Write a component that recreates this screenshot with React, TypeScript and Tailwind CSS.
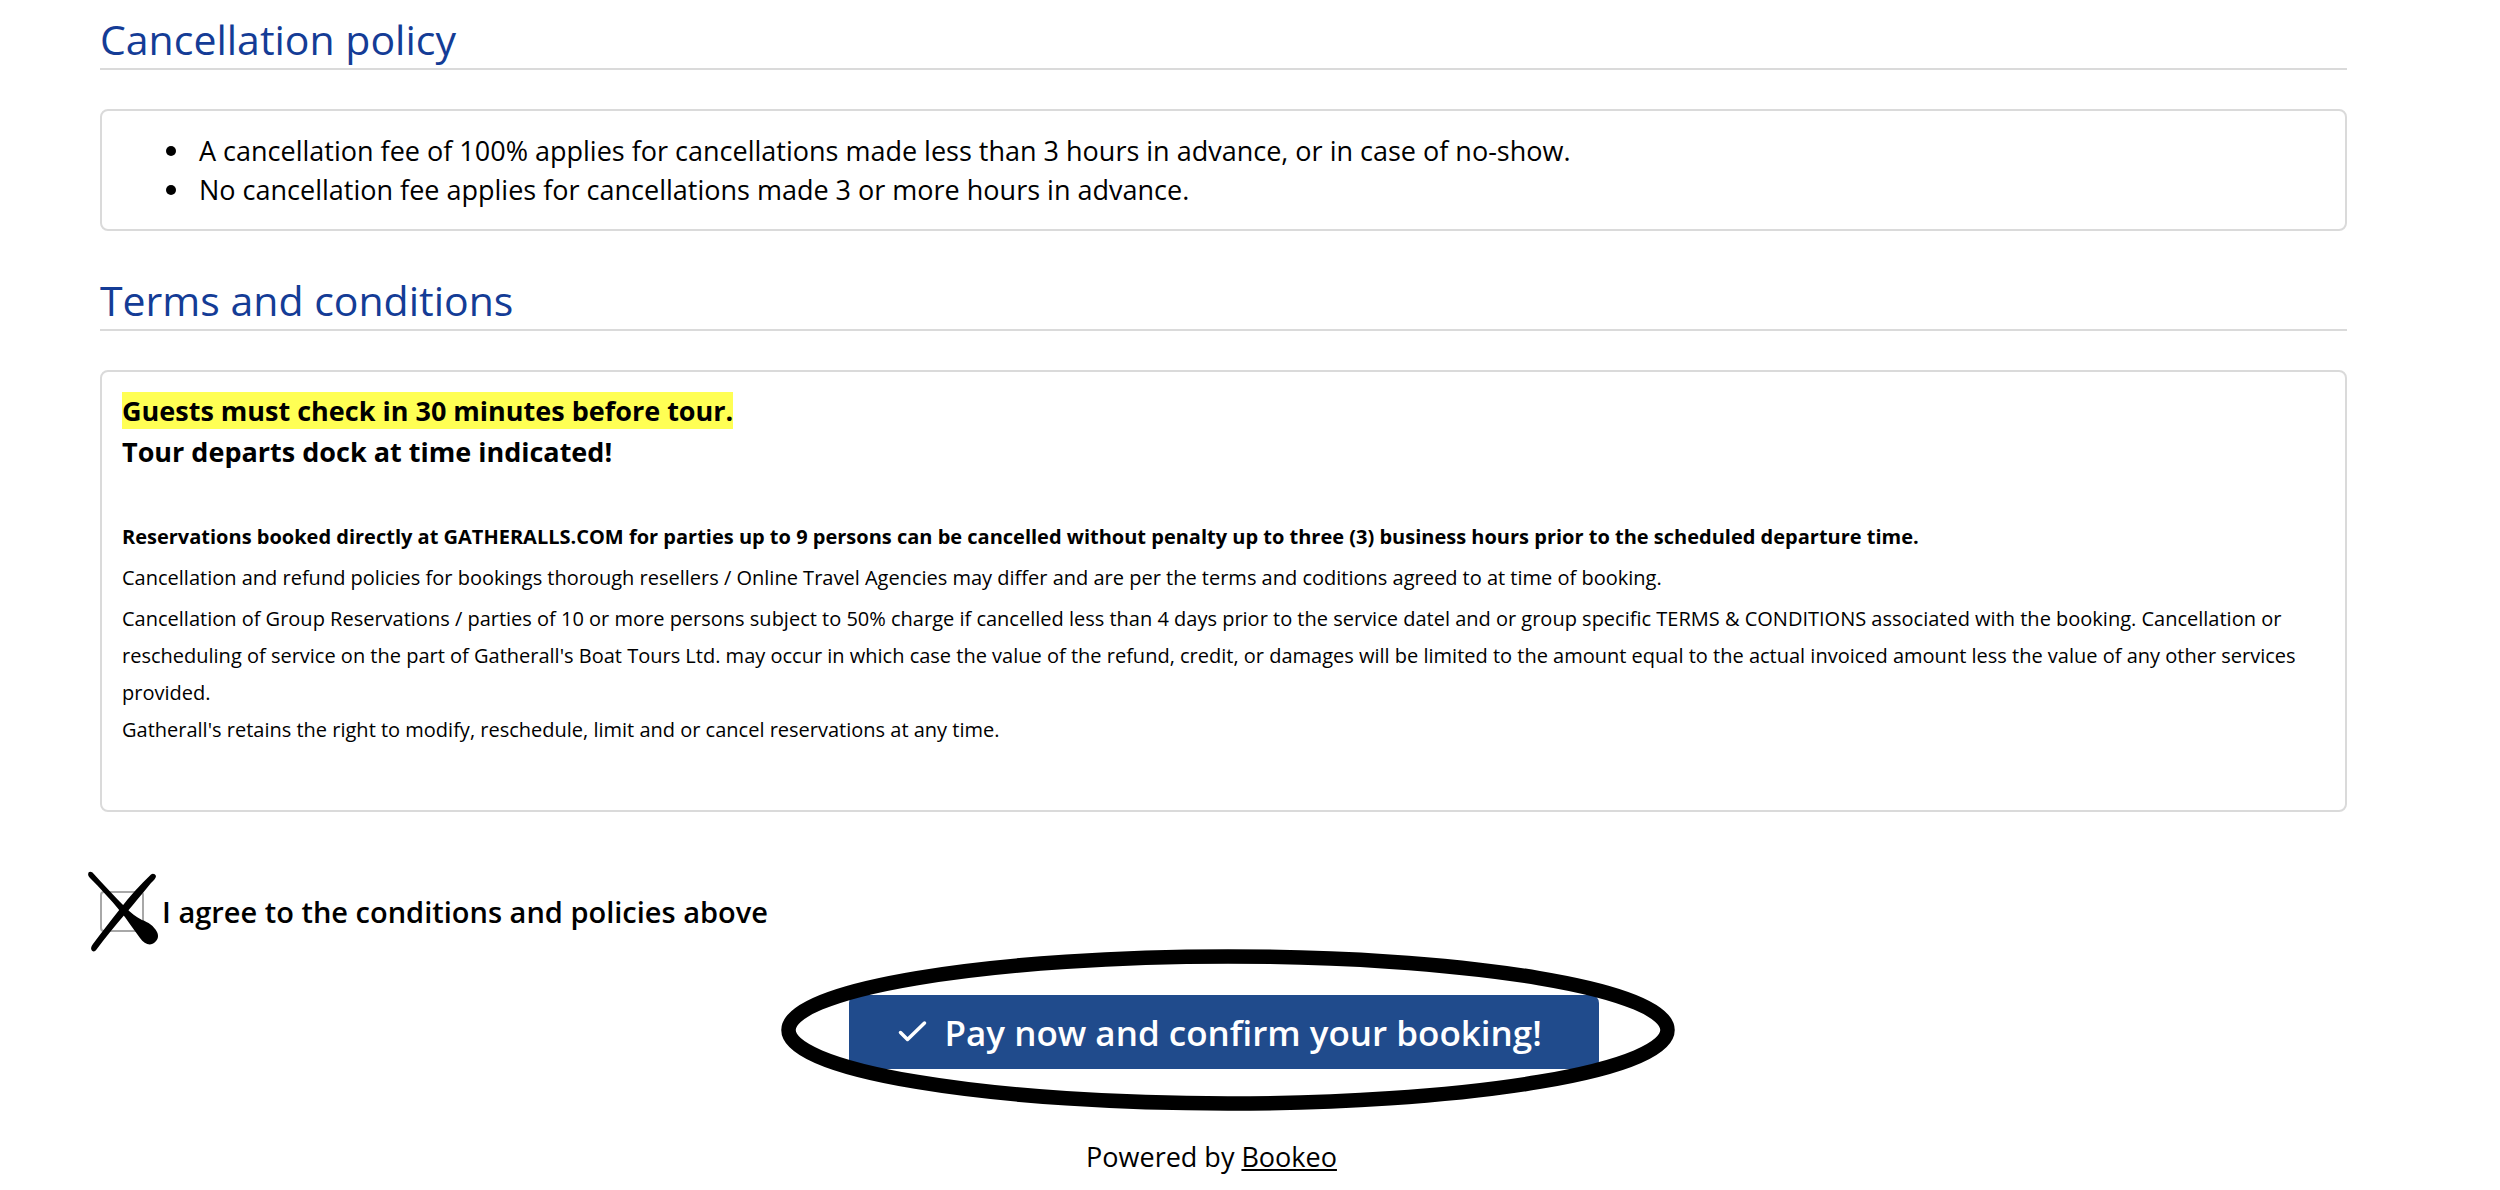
import { useState, type ReactNode } from "react";

const CANCELLATION_RULES = [
  "A cancellation fee of 100% applies for cancellations made less than 3 hours in advance, or in case of no-show.",
  "No cancellation fee applies for cancellations made 3 or more hours in advance.",
];

function Section({ title, children }: { title: string; children: ReactNode }) {
  return (
    <section>
      <h2 className="mb-[39px] h-[70px] border-b-2 border-[#dadada] pt-2 text-[41px] leading-[62px] text-[#143c96]">
        {title}
      </h2>
      <div className="rounded-lg border-2 border-[#dadada] px-5">{children}</div>
    </section>
  );
}

/** Hand-drawn cross over the tick box. */
function PenCross() {
  return (
    <svg
      viewBox="0 0 120 120"
      className="pointer-events-none absolute -left-[30px] -top-[41px] h-[120px] w-[120px]"
      aria-hidden="true"
    >
      <path
        d="M18.5 22.5C17.5 25 18.5 26 20 28C30 38 41 50 50 61C57 69 63 79 70 88C74 94 80 96 84 93C88 90 89 86 87 82C84 76 78 72 72 70C66 67 61 63 56 58C44 46 33 34 22.5 22.5C21 21.5 19.5 21.5 18.5 22.5Z"
        fill="black"
      />
      <path
        d="M81 24.5C83 23 85 24 86 26C86 28 84 30 81 33C71 45 63 55 56 63C45 76 35 88 26.5 99.5C25 102 22.5 102 21.5 100C20.5 98 21.5 96 23 94C32 82 41 70 50 59C60 46 70 35 81 24.5Z"
        fill="black"
      />
    </svg>
  );
}

export default function App() {
  const [agreed, setAgreed] = useState(false);

  return (
    <main className="bg-white pb-2 pl-[100px] pr-[153px] font-['Open_Sans',sans-serif] text-[27px] leading-[39px] text-black">
      <Section title="Cancellation policy">
        <ul className="py-5 pl-11">
          {CANCELLATION_RULES.map((rule) => (
            <li
              key={rule}
              className="flex items-center gap-[23px] before:h-2.5 before:w-2.5 before:shrink-0 before:rounded-full before:bg-black"
            >
              {rule}
            </li>
          ))}
        </ul>
      </Section>

      <div className="mt-[30px]">
        <Section title="Terms and conditions">
          <div className="pb-[62px] pt-[18px] text-[20px] leading-[37px]">
            <p className="text-[27px] font-bold leading-[41px]">
              <span className="bg-[#ffff54]">Guests must check in 30 minutes before tour.</span>
            </p>
            <p className="mb-[44px] text-[27px] font-bold leading-[41px]">
              Tour departs dock at time indicated!
            </p>
            <p className="font-bold leading-[41px]">
              Reservations booked directly at GATHERALLS.COM for parties up to 9 persons can be
              cancelled without penalty up to three (3) business hours prior to the scheduled
              departure time.
            </p>
            <p className="mb-0.5 leading-[41px]">
              Cancellation and refund policies for bookings thorough resellers / Online Travel
              Agencies may differ and are per the terms and coditions agreed to at time of booking.
            </p>
            <p>
              Cancellation of Group Reservations / parties of 10 or more persons subject to 50%
              charge if cancelled less than 4 days prior to the service datel and or group specific
              TERMS &amp; CONDITIONS associated with the booking. Cancellation or rescheduling of
              service on the part of Gatherall's Boat Tours Ltd. may occur in which case the value
              of the refund, credit, or damages will be limited to the amount equal to the actual
              invoiced amount less the value of any other services provided.
            </p>
            <p>
              Gatherall's retains the right to modify, reschedule, limit and or cancel reservations
              at any time.
            </p>
          </div>
        </Section>
      </div>

      <div className="mt-[79px] flex items-center">
        <div className="relative h-[41px] w-11 shrink-0">
          <input
            id="agree"
            type="checkbox"
            checked={agreed}
            onChange={(e) => setAgreed(e.target.checked)}
            className="block h-full w-full appearance-none rounded-sm border-2 border-[#a8a8a8] bg-white"
          />
          <PenCross />
        </div>
        <label htmlFor="agree" className="pl-[18px] text-[29px] font-semibold">
          I agree to the conditions and policies above
        </label>
      </div>

      <div className="mt-[63px] flex justify-center">
        <div className="relative">
          <button
            type="button"
            className="flex h-[74px] w-[750px] items-center rounded-lg bg-[#204b8c] pl-12 text-[35px] font-semibold text-white"
          >
            <svg viewBox="0 0 32 32" className="mr-4 h-8 w-8" fill="none" aria-hidden="true">
              <path
                d="M3.5 16.5L10.5 23.5L27.5 7"
                stroke="currentColor"
                strokeWidth="3.5"
                strokeLinecap="round"
                strokeLinejoin="round"
              />
            </svg>
            Pay now and confirm your booking!
          </button>
          {/* Marker ring round the button */}
          <svg
            viewBox="0 0 900 170"
            className="pointer-events-none absolute -left-[71px] -top-[50px] h-[170px] w-[900px] max-w-none"
            aria-hidden="true"
          >
            <ellipse
              cx="450"
              cy="85"
              rx="439.5"
              ry="73.5"
              fill="none"
              stroke="black"
              strokeWidth="14.5"
            />
          </svg>
        </div>
      </div>

      <p className="mt-[68px] pr-6 text-center">
        Powered by{" "}
        <a href="#bookeo" className="underline">
          Bookeo
        </a>
      </p>
    </main>
  );
}
